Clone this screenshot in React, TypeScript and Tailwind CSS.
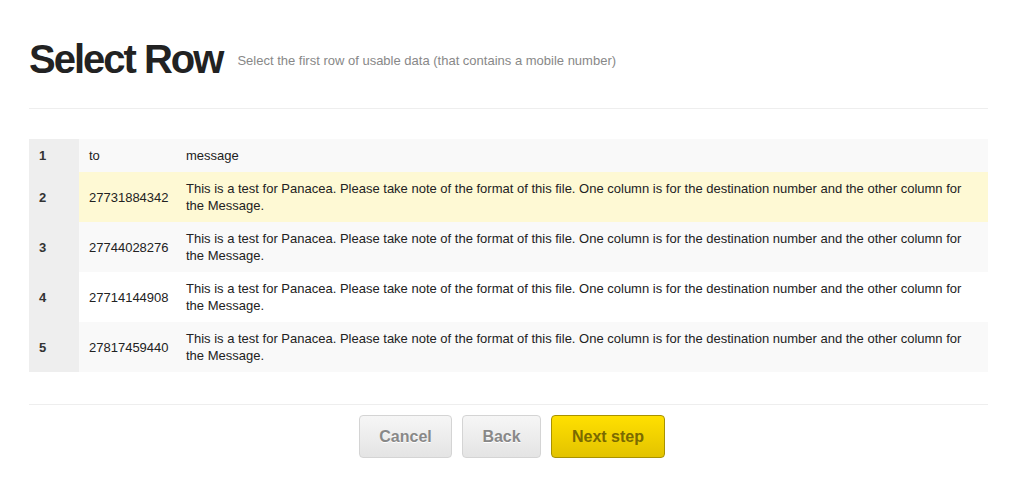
import React from "react";

const msg =
  "This is a test for Panacea. Please take note of the format of this file. One column is for the destination number and the other column for the Message.";

const rows = [
  { n: "1", to: "to", m: "message", bg: "bg-[#f9f9f9]" },
  { n: "2", to: "27731884342", m: msg, bg: "bg-[#fef9d4]" },
  { n: "3", to: "27744028276", m: msg, bg: "bg-[#f9f9f9]" },
  { n: "4", to: "27714144908", m: msg, bg: "bg-white" },
  { n: "5", to: "27817459440", m: msg, bg: "bg-[#f9f9f9]" },
];

export default function App() {
  return (
    <div
      className="w-[1016px] h-[493px] bg-white text-[#333]"
      style={{ fontFamily: '"Liberation Sans", Arial, sans-serif' }}
    >
      <div className="mx-[29px] w-[959px] pt-[39px]">
        <div className="flex items-start">
          <h1 className="text-[40px] leading-[40px] font-bold tracking-[-2px] text-[#222]">
            Select Row
          </h1>
          <span className="ml-[15px] mt-[14px] text-[13px] leading-[15px] text-[#888]">
            Select the first row of usable data (that contains a mobile number)
          </span>
        </div>
        <div className="mt-[29px] h-px bg-[#eeeeee]" />
        <table className="mt-[30px] w-full table-fixed border-collapse text-[13px] leading-[17px]">
          <colgroup>
            <col className="w-[50px]" />
            <col className="w-[97px]" />
            <col />
          </colgroup>
          <tbody>
            {rows.map((r) => (
              <tr key={r.n} className={`${r.bg} cursor-pointer`}>
                <td className="bg-[#eeeeee] px-[10px] py-[8px] align-middle font-bold text-[#333]">
                  {r.n}
                </td>
                <td className="px-[10px] py-[8px] align-middle text-[#222]">{r.to}</td>
                <td className="pl-[10px] pr-[12px] py-[8px] align-middle text-[#222]">{r.m}</td>
              </tr>
            ))}
          </tbody>
        </table>
        <div className="mt-[32px] h-px bg-[#eeeeee]" />
        <div className="mt-[10px] flex justify-center gap-[10px] pl-[7px]">
          <button className="h-[43px] w-[93px] rounded-[4px] border border-[#d4d4d4] bg-gradient-to-b from-[#f6f6f6] to-[#e4e4e4] text-[16px] font-bold text-[#888] [text-shadow:0_1px_0_#fff]">
            Cancel
          </button>
          <button className="h-[43px] w-[79px] rounded-[4px] border border-[#d4d4d4] bg-gradient-to-b from-[#f6f6f6] to-[#e4e4e4] text-[16px] font-bold text-[#888] [text-shadow:0_1px_0_#fff]">
            Back
          </button>
          <button className="h-[43px] w-[114px] rounded-[4px] border border-[#a89200] bg-gradient-to-b from-[#ffe000] to-[#e3c300] text-[16px] font-bold text-[#7a6a00]">
            Next step
          </button>
        </div>
      </div>
    </div>
  );
}
